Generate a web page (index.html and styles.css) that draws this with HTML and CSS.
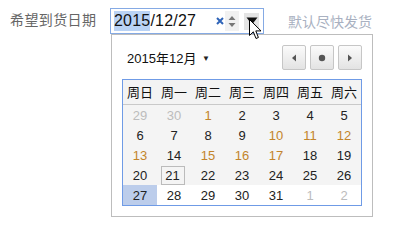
FILE: index.html
```html
<!DOCTYPE html>
<html lang="zh">
<head>
<meta charset="utf-8">
<title>日期选择</title>
<link rel="stylesheet" href="styles.css">
</head>
<body>
<div class="row">
  <label class="label">希望到货日期</label>
  <div class="field">
    <div class="input">
      <span class="value"><span class="sel">2015</span>/12/27</span>
      <span class="tools">
        <svg class="clear" width="8" height="8" viewBox="0 0 8 8"><path d="M1 1L7 7M7 1L1 7" stroke="#2f64b8" stroke-width="2"/></svg>
        <span class="spin">
          <svg width="8" height="14" viewBox="0 0 8 14"><path d="M4 2L7.5 6H0.5Z" fill="#777"/><path d="M0.5 9H7.5L4 13Z" fill="#777"/></svg>
        </span>
        <span class="drop">
          <svg width="12" height="8" viewBox="0 0 12 8"><path d="M0.5 0.5H11.5L6 7.5Z" fill="#111"/></svg>
        </span>
      </span>
    </div>
    <svg class="cursor" width="13" height="21" viewBox="0 0 13 21"><path d="M0.5 0.5V16.5L4.3 12.8L7 19.5L9.4 18.5L6.8 11.9H12Z" fill="#fff" stroke="#000" stroke-width="1" stroke-linejoin="round"/></svg>
    <div class="popup">
      <div class="nav">
        <span class="month">2015年12月 <span class="caret">▼</span></span>
        <span class="btns">
          <span class="btn"><svg width="6" height="8" viewBox="0 0 6 8"><path d="M5 0.5V7.5L1 4Z" fill="#555"/></svg></span>
          <span class="btn"><svg width="8" height="8" viewBox="0 0 8 8"><circle cx="4" cy="4" r="3.2" fill="#555"/></svg></span>
          <span class="btn"><svg width="6" height="8" viewBox="0 0 6 8"><path d="M1 0.5V7.5L5 4Z" fill="#555"/></svg></span>
        </span>
      </div>
      <div class="cal">
        <div class="head">
          <span>周日</span><span>周一</span><span>周二</span><span>周三</span><span>周四</span><span>周五</span><span>周六</span>
        </div>
        <div class="week past">
          <span class="other">29</span><span class="other">30</span><span class="hol">1</span><span>2</span><span>3</span><span>4</span><span>5</span>
        </div>
        <div class="week past">
          <span>6</span><span>7</span><span>8</span><span>9</span><span class="hol">10</span><span class="hol">11</span><span class="hol">12</span>
        </div>
        <div class="week past">
          <span class="hol">13</span><span>14</span><span class="hol">15</span><span class="hol">16</span><span class="hol">17</span><span>18</span><span>19</span>
        </div>
        <div class="week past">
          <span>20</span><span><i class="today">21</i></span><span>22</span><span>23</span><span>24</span><span>25</span><span>26</span>
        </div>
        <div class="week">
          <span class="chosen">27</span><span>28</span><span>29</span><span>30</span><span>31</span><span class="other">1</span><span class="other">2</span>
        </div>
      </div>
    </div>
  </div>
  <span class="hint">默认尽快发货</span>
</div>
</body>
</html>
```

FILE: styles.css
```css
html, body {
  margin: 0;
  padding: 0;
  background: #fff;
}
body {
  font-family: "Liberation Sans", "Noto Sans CJK SC", sans-serif;
  color: #222;
  width: 410px;
  height: 225px;
  overflow: hidden;
}
.row {
  display: flex;
  align-items: flex-start;
  padding: 8px 0 0 10px;
}
.label {
  width: 100px;
  font-family: "Noto Sans CJK SC", sans-serif;
  font-size: 14px;
  line-height: 22px;
  color: #666;
  letter-spacing: 0.4px;
}
.field {
  position: relative;
  width: 154px;
}
.input {
  box-sizing: border-box;
  width: 154px;
  height: 26px;
  border: 1px solid #85aae4;
  display: flex;
  align-items: center;
  background: #fff;
}
.value {
  font-size: 16px;
  line-height: 20px;
  padding-left: 3px;
  color: #111;
  letter-spacing: 0.2px;
}
.sel {
  display: inline-block;
  background: #bad3f5;
  height: 20px;
}
.tools {
  margin-left: auto;
  display: flex;
  align-items: center;
  padding-right: 4px;
}
.clear {
  display: block;
  margin-right: 1px;
}
.spin {
  width: 14px;
  height: 20px;
  background: #f1f1f1;
  display: flex;
  align-items: center;
  justify-content: center;
}
.spin svg {
  display: block;
}
.drop {
  width: 15px;
  height: 17px;
  margin-left: 5px;
  background: #e4e4e4;
  display: flex;
  align-items: center;
  justify-content: center;
}
.drop svg {
  display: block;
}
.cursor {
  position: absolute;
  left: 139px;
  top: 11px;
  z-index: 3;
}
.popup {
  position: absolute;
  left: 1px;
  top: 26px;
  box-sizing: border-box;
  width: 262px;
  height: 183px;
  border: 1px solid #bdbdbd;
  background: #fff;
  padding: 10px;
  z-index: 2;
}
.nav {
  display: flex;
  align-items: center;
  justify-content: space-between;
  height: 25px;
  margin-bottom: 9px;
}
.month {
  padding-left: 5px;
  font-size: 13px;
  color: #111;
}
.caret {
  font-size: 8px;
  color: #222;
  margin-left: 2px;
  vertical-align: 2px;
}
.btns {
  display: flex;
  gap: 4px;
}
.btn {
  box-sizing: border-box;
  width: 24px;
  height: 25px;
  border: 1px solid #c6c6c6;
  border-radius: 2px;
  background: linear-gradient(#fbfbfb, #e3e3e3);
  display: flex;
  align-items: center;
  justify-content: center;
}
.btn svg {
  display: block;
}
.cal {
  box-sizing: border-box;
  width: 240px;
  height: 127px;
  border: 1px solid #6f9be6;
  background: #fff;
}
.head {
  display: grid;
  grid-template-columns: repeat(7, 34px);
  height: 24px;
  background: #f3f3f3;
  border-bottom: 1px solid #c9c9c9;
  align-items: center;
}
.head span {
  text-align: center;
  font-family: "Noto Sans CJK SC", sans-serif;
  font-size: 13px;
  line-height: 16px;
  color: #111;
}
.week {
  display: grid;
  grid-template-columns: repeat(7, 34px);
  height: 20px;
}
.week.past {
  background: #f4f4f4;
}
.week span {
  display: flex;
  align-items: center;
  justify-content: center;
  font-size: 13px;
  color: #222;
}
.week span.other {
  color: #bcbcbc;
}
.week span.hol {
  color: #c3842a;
}
.week span.chosen {
  background: #bccdeb;
}
.today {
  font-style: normal;
  box-sizing: border-box;
  width: 24px;
  height: 19px;
  border: 1px solid #bbb;
  display: flex;
  align-items: center;
  justify-content: center;
  margin-right: 3px;
}
.hint {
  margin-left: 24px;
  font-family: "Noto Sans CJK SC", sans-serif;
  font-size: 14px;
  line-height: 26px;
  color: #a9b1c1;
}
```
